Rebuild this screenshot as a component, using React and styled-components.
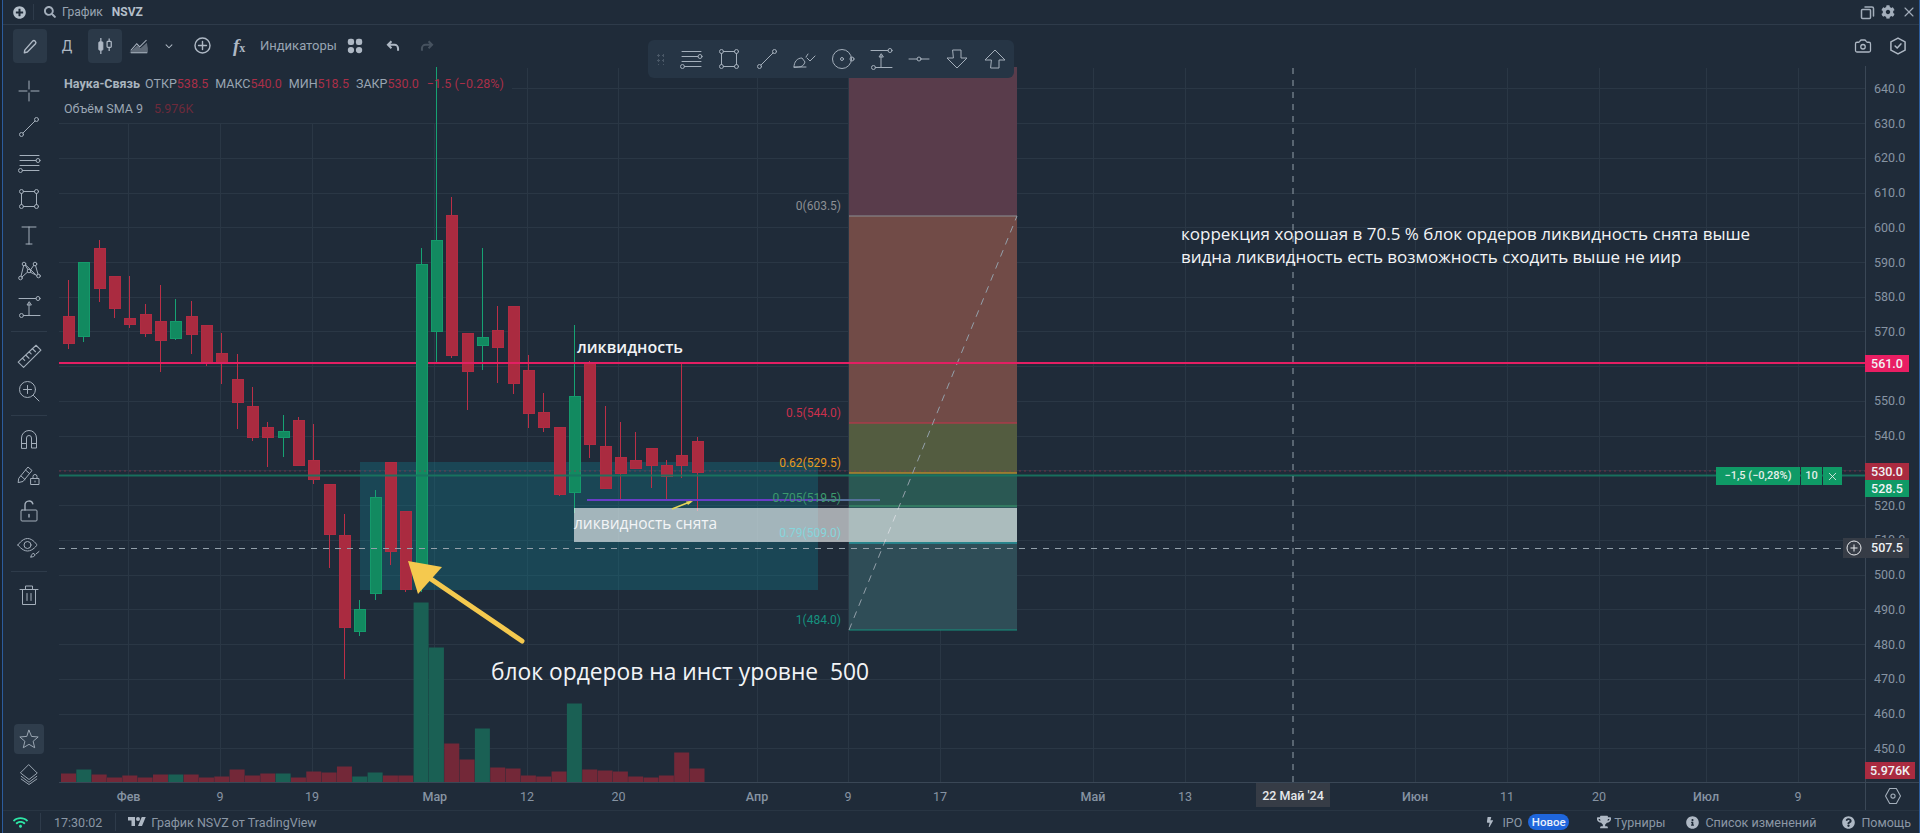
import React from 'react';
import styled, { createGlobalStyle } from 'styled-components';
import { FaPlusCircle, FaSearch, FaCog, FaWifi, FaBolt, FaTrophy, FaInfoCircle, FaQuestionCircle } from 'react-icons/fa';
import { Camera, X } from 'lucide-react';

const BG = '#1f2b39';
const LINE = '#2e3b4a';
const GRID = '#2a3745';
const TEXT = '#98a4b2';
const RED = '#aa2b40';
const GREEN = '#128a60';

const GlobalStyle = createGlobalStyle`
  html, body { margin: 0; padding: 0; background: #18222e; }
  body { font-family: Roboto, "Liberation Sans", sans-serif; font-size: 12px; overflow: hidden; }
`;

// [wick top, body top, body bottom, wick bottom, rising]
const candles = [
  [280, 316, 343, 349], [262, 262, 336, 342, 1], [240, 248, 288, 302], [276, 276, 308, 318],
  [276, 318, 324, 328], [304, 314, 333, 337], [285, 321, 340, 372], [299, 321, 338, 340, 1],
  [301, 316, 334, 354], [325, 325, 363, 366], [333, 353, 362, 384], [354, 379, 402, 429],
  [387, 406, 437, 441], [422, 427, 437, 467], [415, 431, 437, 457, 1], [417, 420, 465, 465],
  [424, 460, 479, 484], [484, 484, 534, 568], [514, 535, 627, 679], [600, 609, 631, 636, 1],
  [490, 497, 593, 600, 1], [462, 462, 551, 565], [511, 511, 589, 592], [248, 264, 566, 592, 1],
  [67, 240, 331, 363, 1], [197, 215, 355, 358], [333, 333, 371, 410], [248, 337, 345, 370, 1],
  [306, 330, 347, 383], [306, 306, 383, 394], [355, 370, 413, 428], [393, 412, 427, 432],
  [427, 427, 494, 496], [325, 396, 492, 513, 1], [361, 363, 444, 458], [406, 446, 488, 488],
  [422, 457, 473, 500], [432, 460, 468, 468], [448, 448, 465, 488], [460, 465, 476, 500],
  [363, 455, 465, 478], [437, 441, 472, 511],
];

// height in px of each volume bar, same order as candles
const volumes = [
  [9], [13, 1], [8], [5], [7], [5], [8], [8, 1], [8], [5], [6], [13], [7], [9], [9, 1], [5], [11], [10], [16],
  [6, 1], [10, 1], [7], [7], [180, 1], [135, 1], [39], [23], [54, 1], [15], [14], [7], [6], [11], [79, 1],
  [13], [12], [11], [6], [5], [7], [30], [14],
];

const barX = (i) => 68 + 15.33 * i;
const priceY = (p) => 88.8 + (640 - p) * 3.474;

const prices = [640, 630, 620, 610, 600, 590, 580, 570, 560, 550, 540, 520, 510, 500, 490, 480, 470, 460, 450];
const gridPrices = [640, 630, 620, 610, 600, 590, 580, 570, 560, 550, 540, 530, 520, 510, 500, 490, 480, 470, 460, 450];
const ticks = [
  ['Фев', 128.6, 1], ['9', 220], ['19', 312], ['Мар', 434.8, 1], ['12', 527], ['20', 618.5], ['Апр', 757, 1],
  ['9', 848], ['17', 940], ['Май', 1093, 1], ['13', 1185], ['Июн', 1415, 1], ['11', 1507], ['20', 1599],
  ['Июл', 1706, 1], ['9', 1798],
];

const fibBands = [
  [67, 216, '#5b3d4b'], [216, 423, '#744c47'], [423, 473, '#555e40'], [473, 506, '#2a5a54'], [506, 543, '#2d5a5c'], [543, 630, '#2f4e58'],
];
const fibLevels = [
  ['0(603.5)', 216, '#8c8f94', 210],
  ['0.5(544.0)', 423, '#c9304d', 417],
  ['0.62(529.5)', 473, '#e6991e', 467],
  ['0.705(519.5)', 506, '#3a9a6c', 502],
  ['0.79(509.0)', 543, '#25b4bd', 537, '#86d6dc'],
  ['1(484.0)', 630, '#16917f', 624],
];

const Window = styled.div`
  margin-left: 2px;
  width: 1918px;
  height: 833px;
  box-sizing: border-box;
  background: ${BG};
  border-left: 1px solid #2c5c9c;
  border-right: 1px solid #2c5c9c;
  display: flex;
  flex-direction: column;
  color: ${TEXT};
  overflow: hidden;
`;

const TopBar = styled.div`
  height: 25px;
  flex: none;
  box-sizing: border-box;
  border-bottom: 1px solid ${LINE};
  display: flex;
  align-items: center;
  padding: 0 2px 0 10px;
  font-size: 12px;
`;

const TopIcons = styled.div`
  margin-left: auto;
  display: flex;
  align-items: center;
  gap: 6px;
  color: #a3aebb;
`;

const TopDivider = styled.span`
  width: 1px;
  height: 16px;
  background: ${LINE};
  margin: 0 10px 0 7px;
`;

const TopLabel = styled.span`
  margin-left: 6px;
`;

const Ticker = styled.b`
  color: #b4bfca;
  font-weight: 700;
  margin-left: 9px;
`;

const Toolbar = styled.div`
  height: 41px;
  flex: none;
  display: flex;
  align-items: center;
  padding: 0 4px 0 10px;
`;

const ToolBtn = styled.button`
  all: unset;
  box-sizing: border-box;
  width: ${(p) => p.$w || 34}px;
  height: 34px;
  flex: none;
  margin-left: ${(p) => p.$ml || 0}px;
  border-radius: 4px;
  display: flex;
  align-items: center;
  justify-content: center;
  background: ${(p) => (p.$active ? '#2b3948' : 'transparent')};
  color: ${(p) => p.$color || '#aeb8c4'};
  font-size: 14px;
`;

const ToolSpacer = styled.div`
  margin-left: auto;
`;

const FxBtn = styled.div`
  margin-left: 14px;
  display: flex;
  align-items: center;
  gap: 5px;
  font-size: 13px;
  color: ${TEXT};
  width: 105px;
  flex: none;
`;

const FxMark = styled.span`
  font-family: "Liberation Serif", serif;
  font-style: italic;
  font-weight: 700;
  font-size: 19px;
  color: #aeb8c4;
  width: 22px;
  line-height: 1;
  & > i { font-size: 12px; font-style: normal; }
`;

const Body = styled.div`
  flex: 1;
  min-height: 0;
  display: flex;
`;

const Rail = styled.div`
  width: 56px;
  flex: none;
  box-sizing: border-box;
  padding: 7px 4px 16px 0;
  display: flex;
  flex-direction: column;
  justify-content: space-between;
  align-items: center;
  color: #a4afbb;
`;

const RailGroup = styled.div`
  display: flex;
  flex-direction: column;
  align-items: center;
`;

const RailBtn = styled.div`
  height: ${(p) => p.$h || 36}px;
  width: 30px;
  display: flex;
  align-items: center;
  justify-content: center;
  border-radius: 4px;
  background: ${(p) => (p.$active ? '#2f3d4c' : 'transparent')};
`;

const RailRule = styled.div`
  width: 36px;
  height: 1px;
  background: ${LINE};
  margin: 6px 0 5px;
`;

const ChartColumn = styled.div`
  flex: 1;
  min-width: 0;
  display: flex;
  flex-direction: column;
`;

const ChartRow = styled.div`
  flex: 1;
  min-height: 0;
  display: flex;
  border-bottom: 1px solid #3a4756;
`;

const ChartPane = styled.div`
  flex: 1;
  position: relative;
  & > svg { display: block; }
`;

const Legend = styled.div`
  position: absolute;
  left: 5px;
  top: 10px;
  line-height: 16px;
  font-size: 12.5px;
  color: #9aa6b3;
  white-space: nowrap;
`;

const LegendRow = styled.div`
  display: flex;
  height: 25px;
`;

const LegendName = styled.b`
  font-weight: 700;
  color: #a9b4bf;
  margin-right: 5px;
`;

const LegendItem = styled.span`
  margin-right: 7px;
`;

const LegendValue = styled.span`
  color: ${(p) => p.$color || '#a92f48'};
  margin-left: ${(p) => p.$ml || 0}px;
`;

const FloatBar = styled.div`
  position: absolute;
  left: 589px;
  top: -26px;
  width: 366px;
  height: 38px;
  box-sizing: border-box;
  padding-left: 8px;
  background: #263545;
  border-radius: 6px;
  display: flex;
  align-items: center;
  color: #a4afbb;
`;

const FloatGrip = styled.div`
  width: 8px;
  height: 12px;
  flex: none;
  margin-right: 8px;
  background-image: radial-gradient(circle, #4a5867 1px, transparent 1.2px);
  background-size: 5px 5px;
`;

const FloatTool = styled.div`
  width: 38px;
  flex: none;
  display: flex;
  justify-content: center;
`;

const OrderTag = styled.div`
  position: absolute;
  left: 1657px;
  top: 401px;
  height: 18px;
  display: flex;
  gap: 1px;
  font-size: 11px;
  font-weight: 500;
  line-height: 18px;
  color: #e4efe9;
`;

const OrderCell = styled.div`
  width: ${(p) => p.$w}px;
  background: #0f9a66;
  display: flex;
  align-items: center;
  justify-content: center;
`;

const PriceAxis = styled.div`
  width: 54px;
  flex: none;
  position: relative;
  border-left: 1px solid #3a4756;
  box-sizing: border-box;
`;

const PriceTick = styled.span`
  position: absolute;
  left: 8px;
  transform: translateY(-50%);
  font-size: 12.5px;
  color: #8794a3;
`;

const PriceTag = styled.span`
  position: absolute;
  left: -1px;
  top: ${(p) => p.$top}px;
  width: ${(p) => p.$w || 44}px;
  height: ${(p) => p.$h || 17}px;
  line-height: ${(p) => p.$h || 17}px;
  background: ${(p) => p.$bg};
  color: #f0f3f5;
  font-size: 12.5px;
  font-weight: 500;
  text-align: center;
`;

const CrossPlus = styled.span`
  position: absolute;
  left: -23px;
  top: 472px;
  width: 22px;
  height: 20px;
  background: #363c46;
  display: flex;
  align-items: center;
  justify-content: center;
  color: #e8eaed;
`;

const TimeRow = styled.div`
  height: 27px;
  flex: none;
  display: flex;
`;

const TimeScale = styled.div`
  flex: 1;
  position: relative;
`;

const TimeTick = styled.span`
  position: absolute;
  top: 6px;
  transform: translateX(-50%);
  font-size: 12.5px;
  font-weight: ${(p) => (p.$month ? 500 : 400)};
  color: #8794a3;
`;

const TimeCursor = styled.span`
  position: absolute;
  left: 1197px;
  top: 0;
  width: 74px;
  height: 24px;
  line-height: 25px;
  background: #363c46;
  color: #e6e8eb;
  font-size: 12.5px;
  font-weight: 500;
  text-align: center;
`;

const AxisCorner = styled.div`
  width: 54px;
  flex: none;
  box-sizing: border-box;
  border-left: 1px solid #3a4756;
  display: flex;
  align-items: center;
  justify-content: center;
  color: #a4afbb;
  padding-bottom: 1px;
`;

const Footer = styled.div`
  height: 23px;
  flex: none;
  box-sizing: border-box;
  border-top: 1px solid #283543;
  display: flex;
  align-items: center;
  padding: 0 8px 0 10px;
  font-size: 12.5px;
  color: #8b97a5;
`;

const FootRule = styled.span`
  width: 1px;
  height: 18px;
  background: ${LINE};
  margin: 0 ${(p) => p.$r}px 0 ${(p) => p.$l}px;
`;

const FootLink = styled.span`
  display: flex;
  align-items: center;
  gap: ${(p) => p.$gap || 5}px;
  margin-left: ${(p) => p.$ml || 0}px;
  white-space: nowrap;
  & > svg { color: #aeb8c4; }
`;

const FootRight = styled.div`
  margin-left: auto;
  display: flex;
  align-items: center;
`;

const Badge = styled.span`
  background: #1f66dc;
  color: #e9f0fb;
  font-weight: 500;
  border-radius: 9px;
  height: 16px;
  line-height: 16px;
  width: 41px;
  margin-left: 6px;
  text-align: center;
  font-size: 11.5px;
`;

const FibLabel = styled.text`
  font-family: Roboto, sans-serif;
  font-size: 12px;
  text-anchor: end;
`;

const Note = styled.text`
  font-family: "Open Sans", sans-serif;
  fill: ${(p) => p.$fill || '#f2f4f6'};
  font-size: ${(p) => p.$size}px;
  font-weight: ${(p) => p.$weight || 400};
  white-space: pre;
`;

const Glyph = ({ size = 24, vb = 24, children, sw = 1 }) => (
  <svg width={size} height={size} viewBox={`0 0 ${vb} ${vb}`} fill="none" stroke="currentColor" strokeWidth={sw} strokeLinecap="round" strokeLinejoin="round">
    {children}
  </svg>
);

const Crosshair = () => <Glyph><path d="M12 2v8M12 14v8M2 12h8M14 12h8" /></Glyph>;
const Trend = () => <Glyph><circle cx="4.5" cy="19.5" r="2" /><circle cx="19.5" cy="4.5" r="2" /><path d="M6 18 18 6" /></Glyph>;
const FibLines = () => <Glyph><path d="M3 4.5h19M3 9.5h16M3 14.5h19M5.5 19.5H22" /><circle cx="21" cy="9.5" r="2" /><circle cx="3.5" cy="19.5" r="2" /></Glyph>;
const RectTool = () => <Glyph><circle cx="4.5" cy="4.5" r="2" /><circle cx="19.5" cy="4.5" r="2" /><circle cx="4.5" cy="19.5" r="2" /><circle cx="19.5" cy="19.5" r="2" /><path d="M6.5 4.5h11M6.5 19.5h11M4.5 6.5v11M19.5 6.5v11" /></Glyph>;
const TextTool = () => <Glyph><path d="M5 4h14M12 4v17M9 21h6" /></Glyph>;
const Pattern = () => (
  <Glyph>
    <circle cx="3.5" cy="19" r="1.8" /><circle cx="7" cy="5" r="1.8" /><circle cx="12" cy="12" r="1.8" /><circle cx="18" cy="5" r="1.8" /><circle cx="21.5" cy="17" r="1.8" />
    <path d="M4 17.3 6.6 6.8M8.3 6.2l2.6 4.4M13.5 11l3.2-4.6M18.6 6.7l2.4 8.6M5 18l5.6-5M13.3 13.2l6.6 3.3M8.5 5.8l9.9 9.5" />
  </Glyph>
);
const PositionTool = () => (
  <Glyph>
    <path d="M2 3.5h17M12 20.5V8M12 7l-2 3h4zM7 20.5h16" /><circle cx="21" cy="3.5" r="2" /><circle cx="4.5" cy="20.5" r="2" />
  </Glyph>
);
const Ruler = () => <Glyph size={26}><path d="M2 18.5 18.5 3 23 7.5 7 23.5zM6 15l2 2M9 12l3 3M12 9l2 2M15 6l3 3" /></Glyph>;
const ZoomIn = () => <Glyph><circle cx="10.5" cy="10.5" r="8" /><path d="M16.5 16.5 22 22M10.5 6.5v8M6.5 10.5h8" /></Glyph>;
const Magnet = () => <Glyph><path d="M4.5 21V11a7.5 7.5 0 0 1 15 0v10h-5V11a2.5 2.5 0 0 0-5 0v10zM4.5 16.5h5M14.5 16.5h5" /></Glyph>;
const PencilLock = () => (
  <Glyph>
    <path d="M2 15 11 4l4 3.5-9 11-4.5 1zM4 13l4 3.5M8.5 7l4 3.5" /><rect x="14" y="15.5" width="8" height="6" /><path d="M16 15.5v-2a2 2 0 0 1 4 0v2M18 18v1" />
  </Glyph>
);
const LockOpen = () => <Glyph><rect x="4" y="11" width="16" height="11" rx="1" /><path d="M8 11V6a4 4 0 0 1 7.8-1.2M12 15.5v2.5" strokeWidth="1.4" /></Glyph>;
const EyeBrush = () => (
  <Glyph>
    <path d="M1 10s4-6.5 9.500-6.500S20 10 20 10s-4 6-9.500 6S1 10 1 10z" /><circle cx="10.500" cy="10" r="3.500" />
    <path d="M14 22c0-2 1-3.500 3-3.500l1 1.500c-.5 1.500-2 2-4 2zM19 19l3-2.500" />
  </Glyph>
);
const Trash = () => <Glyph><path d="M3 6.500h18M8.500 6V3h7v3M5.500 7v14.500h13V7M10 10.500v7M14 10.500v7" /></Glyph>;
const Star = () => <Glyph size={22}><path d="M12 2.500l2.800 6.700 7.200.6-5.500 4.700 1.700 7-6.200-3.700-6.200 3.700 1.700-7L2 9.800l7.200-.6z" /></Glyph>;
const Layers = () => <Glyph size={22}><path d="M12 2 21 11l-9 7-9-7zM3.500 14.500l8.500 6.500 8.500-6.500M3.500 17.500l8.500 6 8.500-6" /></Glyph>;

const Pencil = () => <Glyph size={18} sw={1.9}><path d="M5 17.500 15.500 5.500a2.600 2.600 0 0 1 3.800 3.500L8.500 20l-4 1z" /></Glyph>;
const CandleIcon = () => (
  <svg width="20" height="20" viewBox="0 0 24 24" fill="currentColor" stroke="currentColor">
    <path d="M7 2.500v19M17 3v15" strokeWidth="1.5" fill="none" />
    <rect x="4.500" y="7" width="5" height="10" rx="1" />
    <rect x="14.500" y="6.500" width="5" height="7" rx="1" fill="#2b3948" strokeWidth="1.5" />
  </svg>
);
const AreaIcon = () => (
  <svg width="20" height="18" viewBox="0 0 26 24" fill="none" stroke="currentColor" strokeWidth="1.400">
    <path d="M2 18 10 9l4 4 9-9" />
    <path d="M2 20h22v-5l-1-6-8 7-4-4-9 8z" fill="currentColor" opacity=".45" />
    <path d="M2 21h22" />
  </svg>
);
const Chevron = () => <Glyph size={14}><path d="M7 10l5 5 5-5" strokeWidth="1.800" /></Glyph>;
const PlusRing = () => <Glyph size={19} sw={1.800}><circle cx="12" cy="12" r="9.500" /><path d="M12 7v10M7 12h10" /></Glyph>;
const Blocks = () => (
  <svg width="18" height="18" viewBox="0 0 20 20" fill="currentColor">
    <rect x="2" y="2" width="7" height="7" rx="2.500" /><rect x="11" y="2" width="7" height="7" rx="2.500" />
    <rect x="2" y="11" width="7" height="7" rx="3.500" /><rect x="11" y="11" width="7" height="7" rx="3.500" />
  </svg>
);
const ArrowBack = ({ flip }) => (
  <svg width="14" height="14" viewBox="0 0 18 18" fill="none" stroke="currentColor" strokeWidth="2.600" style={flip ? { transform: 'scaleX(-1)' } : undefined}>
    <path d="M7 3 2.500 7.500 7 12M3 7.500h8a4.500 4.500 0 0 1 4.500 4.500v3" />
  </svg>
);
const HexCheck = () => <Glyph size={20} sw={1.800}><path d="M12 2.500 20.500 7v10L12 21.500 3.500 17V7z" /><path d="m8.500 12 2.500 2.500 4.500-5" /></Glyph>;
const HexDot = () => <Glyph size={20} sw={1.300}><path d="M8 3h8l5 9-5 9H8l-5-9z" /><circle cx="12" cy="12" r="2.500" /></Glyph>;
const Restore = () => <Glyph size={15} vb={15} sw={1.500}><rect x="1.500" y="4.500" width="9" height="9" rx="1" /><path d="M5 2h7a1.500 1.500 0 0 1 1.500 1.500V11" /></Glyph>;
const TvLogo = () => (
  <svg width="18" height="14" viewBox="0 0 36 28" fill="#aeb8c4">
    <path d="M14 22H7V11H0V4h14v18zM28 22h-8l7.500-18h8L28 22z" /><circle cx="20" cy="8" r="4" />
  </svg>
);

const BrushTool = () => <Glyph><path d="M1 20c0-5 3-9 8-9l3 4c-1 3-3 5-6 5zM1 20h12M14 11l3 3 5-5M15 7l-2 3" /></Glyph>;
const Orbit = () => <Glyph><circle cx="11" cy="12" r="9.500" /><circle cx="11" cy="12" r="1.500" /><circle cx="21" cy="12" r="2" /></Glyph>;
const HandleLine = () => <Glyph><path d="M2 12h8M14 12h8" /><circle cx="12" cy="12" r="2" /></Glyph>;
const DownArrow = () => <Glyph><path d="M8 3h8v8h6L12 21 2 11h6z" /></Glyph>;
const UpArrow = () => <Glyph><path d="M8 21h8v-8h6L12 3 2 13h6z" /></Glyph>;

const candleBody = ([top, bodyTop, bodyBottom, bottom, up], i) => {
  const x = Math.round(barX(i));
  return (
    <g key={i} shapeRendering="crispEdges">
      <line x1={x + 0.5} x2={x + 0.5} y1={top} y2={bottom} stroke={up ? '#16a273' : '#bb2f47'} />
      <rect x={x - 5} y={bodyTop} width={11} height={bodyBottom - bodyTop} fill={up ? GREEN : RED} stroke={up ? '#159a6b' : '#b02c43'} strokeWidth="1" />
    </g>
  );
};

const ChartDrawing = () => (
  <svg width="1806" height="716" viewBox="59 66 1806 716">
    {/* grid */}
    <g stroke={GRID} strokeWidth="1" shapeRendering="crispEdges">
      {gridPrices.map((p) => (
        <line key={p} x1={p === 640 ? 512 : 59} x2="1865" y1={priceY(p)} y2={priceY(p)} />
      ))}
      {ticks.map(([label, x]) => (
        <line key={`${label}${x}`} x1={x} x2={x} y1={x < 512 ? 124 : 68} y2="782" />
      ))}
    </g>

    {/* order block */}
    <rect x="360" y="462" width="458" height="128" fill="#0f7f92" opacity=".32" />

    {/* volume */}
    {volumes.map(([h, up], i) => (
      <rect key={i} x={barX(i) - 7} y={782.5 - h} width="15" height={h} fill={up ? '#1a6054' : '#732838'} />
    ))}

    {candles.map(candleBody)}

    {/* fib retracement */}
    {fibBands.map(([from, to, color]) => (
      <rect key={from} x="849" y={from} width="168" height={to - from} fill={color} opacity=".97" />
    ))}
    {fibLevels.map(([label, y, color]) => (
      <line key={label} x1="849" x2="1017" y1={y} y2={y} stroke={color} strokeWidth="1.200" />
    ))}
    <line x1="849" y1="630" x2="1017" y2="216" stroke="#93a0aa" strokeDasharray="7 6" />

    {/* levels */}
    <line x1="59" x2="1865" y1="363" y2="363" stroke="#e31f63" strokeWidth="2" />
    {candleBody(candles[23], 23)}
    <line x1="59" x2="1865" y1="471" y2="471" stroke="#a3354c" strokeDasharray="2 3" opacity=".6" />
    <line x1="59" x2="1865" y1="475.500" y2="475.500" stroke="#187761" strokeWidth="2" opacity=".9" />
    <line x1="587" x2="880" y1="500" y2="500" stroke="#6a3cc6" strokeWidth="2" />
    <line x1="818" x2="880" y1="500" y2="500" stroke="#56709a" strokeWidth="2" />
    <line x1="59" x2="1843" y1="548.500" y2="548.500" stroke="#93a0aa" strokeDasharray="6 6" />
    <line x1="1293" x2="1293" y1="68" y2="782" stroke="#93a0aa" strokeDasharray="6 6" />

    {/* liquidity box */}
    <rect x="574" y="508" width="443" height="34" fill="#fff" opacity=".6" />
    <path d="M672 509 691 501.500" stroke="#e7d65a" strokeWidth="1.500" />
    <path d="M693 501 686 501.500 688 505z" fill="#e7d65a" />

    {fibLevels.map(([label, , color, ty, textColor]) => (
      <FibLabel key={label} x="841" y={ty} fill={textColor || color}>{label}</FibLabel>
    ))}

    {/* arrow */}
    <path d="M522 641 425 575" stroke="#f5c94e" strokeWidth="5" strokeLinecap="round" />
    <path d="M408 561 442 567 418 594z" fill="#f5c94e" />

    {/* notes */}
    <Note x="577" y="353" $size={16} $weight={600}>ликвидность</Note>
    <Note x="574" y="529" $size={15.500}>ликвидность снята</Note>
    <Note x="1181" y="240" $size={17}>коррекция хорошая в 70.5 % блок ордеров ликвидность снята выше</Note>
    <Note x="1181" y="263" $size={17}>видна ликвидность есть возможность сходить выше не иир</Note>
    <Note x="491" y="680" $size={22.800}>блок ордеров на инст уровне  500</Note>
  </svg>
);

const App = () => (
  <Window>
    <GlobalStyle />
    <TopBar>
      <FaPlusCircle size={13} color="#b4bfca" />
      <TopDivider />
      <FaSearch size={12} color="#a3aebb" />
      <TopLabel>График</TopLabel>
      <Ticker>NSVZ</Ticker>
      <TopIcons>
        <Restore />
        <FaCog size={14} />
        <X size={16} strokeWidth={1.6} />
      </TopIcons>
    </TopBar>

    <Toolbar>
      <ToolBtn $active><Pencil /></ToolBtn>
      <ToolBtn $w={40}>Д</ToolBtn>
      <ToolBtn $active $ml={1}><CandleIcon /></ToolBtn>
      <ToolBtn><AreaIcon /></ToolBtn>
      <ToolBtn $w={26}><Chevron /></ToolBtn>
      <ToolBtn $ml={3}><PlusRing /></ToolBtn>
      <FxBtn><FxMark>f<i>x</i></FxMark>Индикаторы</FxBtn>
      <ToolBtn><Blocks /></ToolBtn>
      <ToolBtn $ml={4}><ArrowBack /></ToolBtn>
      <ToolBtn $color="#46525f"><ArrowBack flip /></ToolBtn>
      <ToolSpacer />
      <ToolBtn><Camera size={18} strokeWidth={1.7} /></ToolBtn>
      <ToolBtn $ml={1}><HexCheck /></ToolBtn>
    </Toolbar>

    <Body>
      <Rail>
        <RailGroup>
          <RailBtn><Crosshair /></RailBtn>
          <RailBtn><Trend /></RailBtn>
          <RailBtn><FibLines /></RailBtn>
          <RailBtn><RectTool /></RailBtn>
          <RailBtn><TextTool /></RailBtn>
          <RailBtn><Pattern /></RailBtn>
          <RailBtn><PositionTool /></RailBtn>
          <RailRule />
          <RailBtn><Ruler /></RailBtn>
          <RailBtn><ZoomIn /></RailBtn>
          <RailRule />
          <RailBtn><Magnet /></RailBtn>
          <RailBtn><PencilLock /></RailBtn>
          <RailBtn><LockOpen /></RailBtn>
          <RailBtn><EyeBrush /></RailBtn>
          <RailRule />
          <RailBtn><Trash /></RailBtn>
        </RailGroup>
        <RailGroup>
          <RailBtn $h={30} $active><Star /></RailBtn>
          <RailBtn $h={40}><Layers /></RailBtn>
        </RailGroup>
      </Rail>

      <ChartColumn>
        <ChartRow>
          <ChartPane>
            <ChartDrawing />
            <Legend>
              <LegendRow>
                <LegendName>Наука-Связь</LegendName>
                <LegendItem>ОТКР<LegendValue>538.5</LegendValue></LegendItem>
                <LegendItem>МАКС<LegendValue>540.0</LegendValue></LegendItem>
                <LegendItem>МИН<LegendValue>518.5</LegendValue></LegendItem>
                <LegendItem>ЗАКР<LegendValue>530.0</LegendValue><LegendValue $ml={8}>−1.5 (−0.28%)</LegendValue></LegendItem>
              </LegendRow>
              <LegendRow>
                <LegendItem>Объём SMA 9<LegendValue $ml={11} $color="#6d2a3b">5.976K</LegendValue></LegendItem>
              </LegendRow>
            </Legend>
            <FloatBar>
              <FloatGrip />
              <FloatTool><FibLines /></FloatTool>
              <FloatTool><RectTool /></FloatTool>
              <FloatTool><Trend /></FloatTool>
              <FloatTool><BrushTool /></FloatTool>
              <FloatTool><Orbit /></FloatTool>
              <FloatTool><PositionTool /></FloatTool>
              <FloatTool><HandleLine /></FloatTool>
              <FloatTool><DownArrow /></FloatTool>
              <FloatTool><UpArrow /></FloatTool>
            </FloatBar>
            <OrderTag>
              <OrderCell $w={84}>−1,5 (−0,28%)</OrderCell>
              <OrderCell $w={21}>10</OrderCell>
              <OrderCell $w={19}><X size={13} strokeWidth={1.6} /></OrderCell>
            </OrderTag>
          </ChartPane>
          <PriceAxis>
            {prices.map((p) => (
              <PriceTick key={p} style={{ top: priceY(p) - 67 }}>{p.toFixed(1)}</PriceTick>
            ))}
            <PriceTag $top={289} $bg="#e91e63">561.0</PriceTag>
            <PriceTag $top={397} $bg={RED}>530.0</PriceTag>
            <PriceTag $top={414} $bg="#0f9a66">528.5</PriceTag>
            <PriceTag $top={472} $h={20} $bg="#363c46">507.5</PriceTag>
            <PriceTag $top={696} $w={50} $bg={RED}>5.976K</PriceTag>
            <CrossPlus>
              <svg width="16" height="16" viewBox="0 0 16 16" fill="none" stroke="currentColor"><circle cx="8" cy="8" r="7" /><path d="M8 4.500v7M4.500 8h7" /></svg>
            </CrossPlus>
          </PriceAxis>
        </ChartRow>
        <TimeRow>
          <TimeScale>
            {ticks.map(([label, x, month]) => (
              <TimeTick key={`${label}${x}`} $month={month} style={{ left: x - 59 }}>{label}</TimeTick>
            ))}
            <TimeCursor>22 Май '24</TimeCursor>
          </TimeScale>
          <AxisCorner><HexDot /></AxisCorner>
        </TimeRow>
      </ChartColumn>
    </Body>

    <Footer>
      <FaWifi size={15} color="#2ee6a6" />
      <FootRule $l={12} $r={13} />
      <span>17:30:02</span>
      <FootRule $l={13} $r={12} />
      <FootLink $gap={5}><TvLogo />График NSVZ от TradingView</FootLink>
      <FootRight>
        <FootLink $gap={7}><FaBolt size={10} />IPO</FootLink>
        <Badge>Новое</Badge>
        <FootLink $ml={28} $gap={3}><FaTrophy size={14} />Турниры</FootLink>
        <FootLink $ml={21} $gap={6}><FaInfoCircle size={13} />Список изменений</FootLink>
        <FootLink $ml={26} $gap={6}><FaQuestionCircle size={13} />Помощь</FootLink>
      </FootRight>
    </Footer>
  </Window>
);

export default App;
